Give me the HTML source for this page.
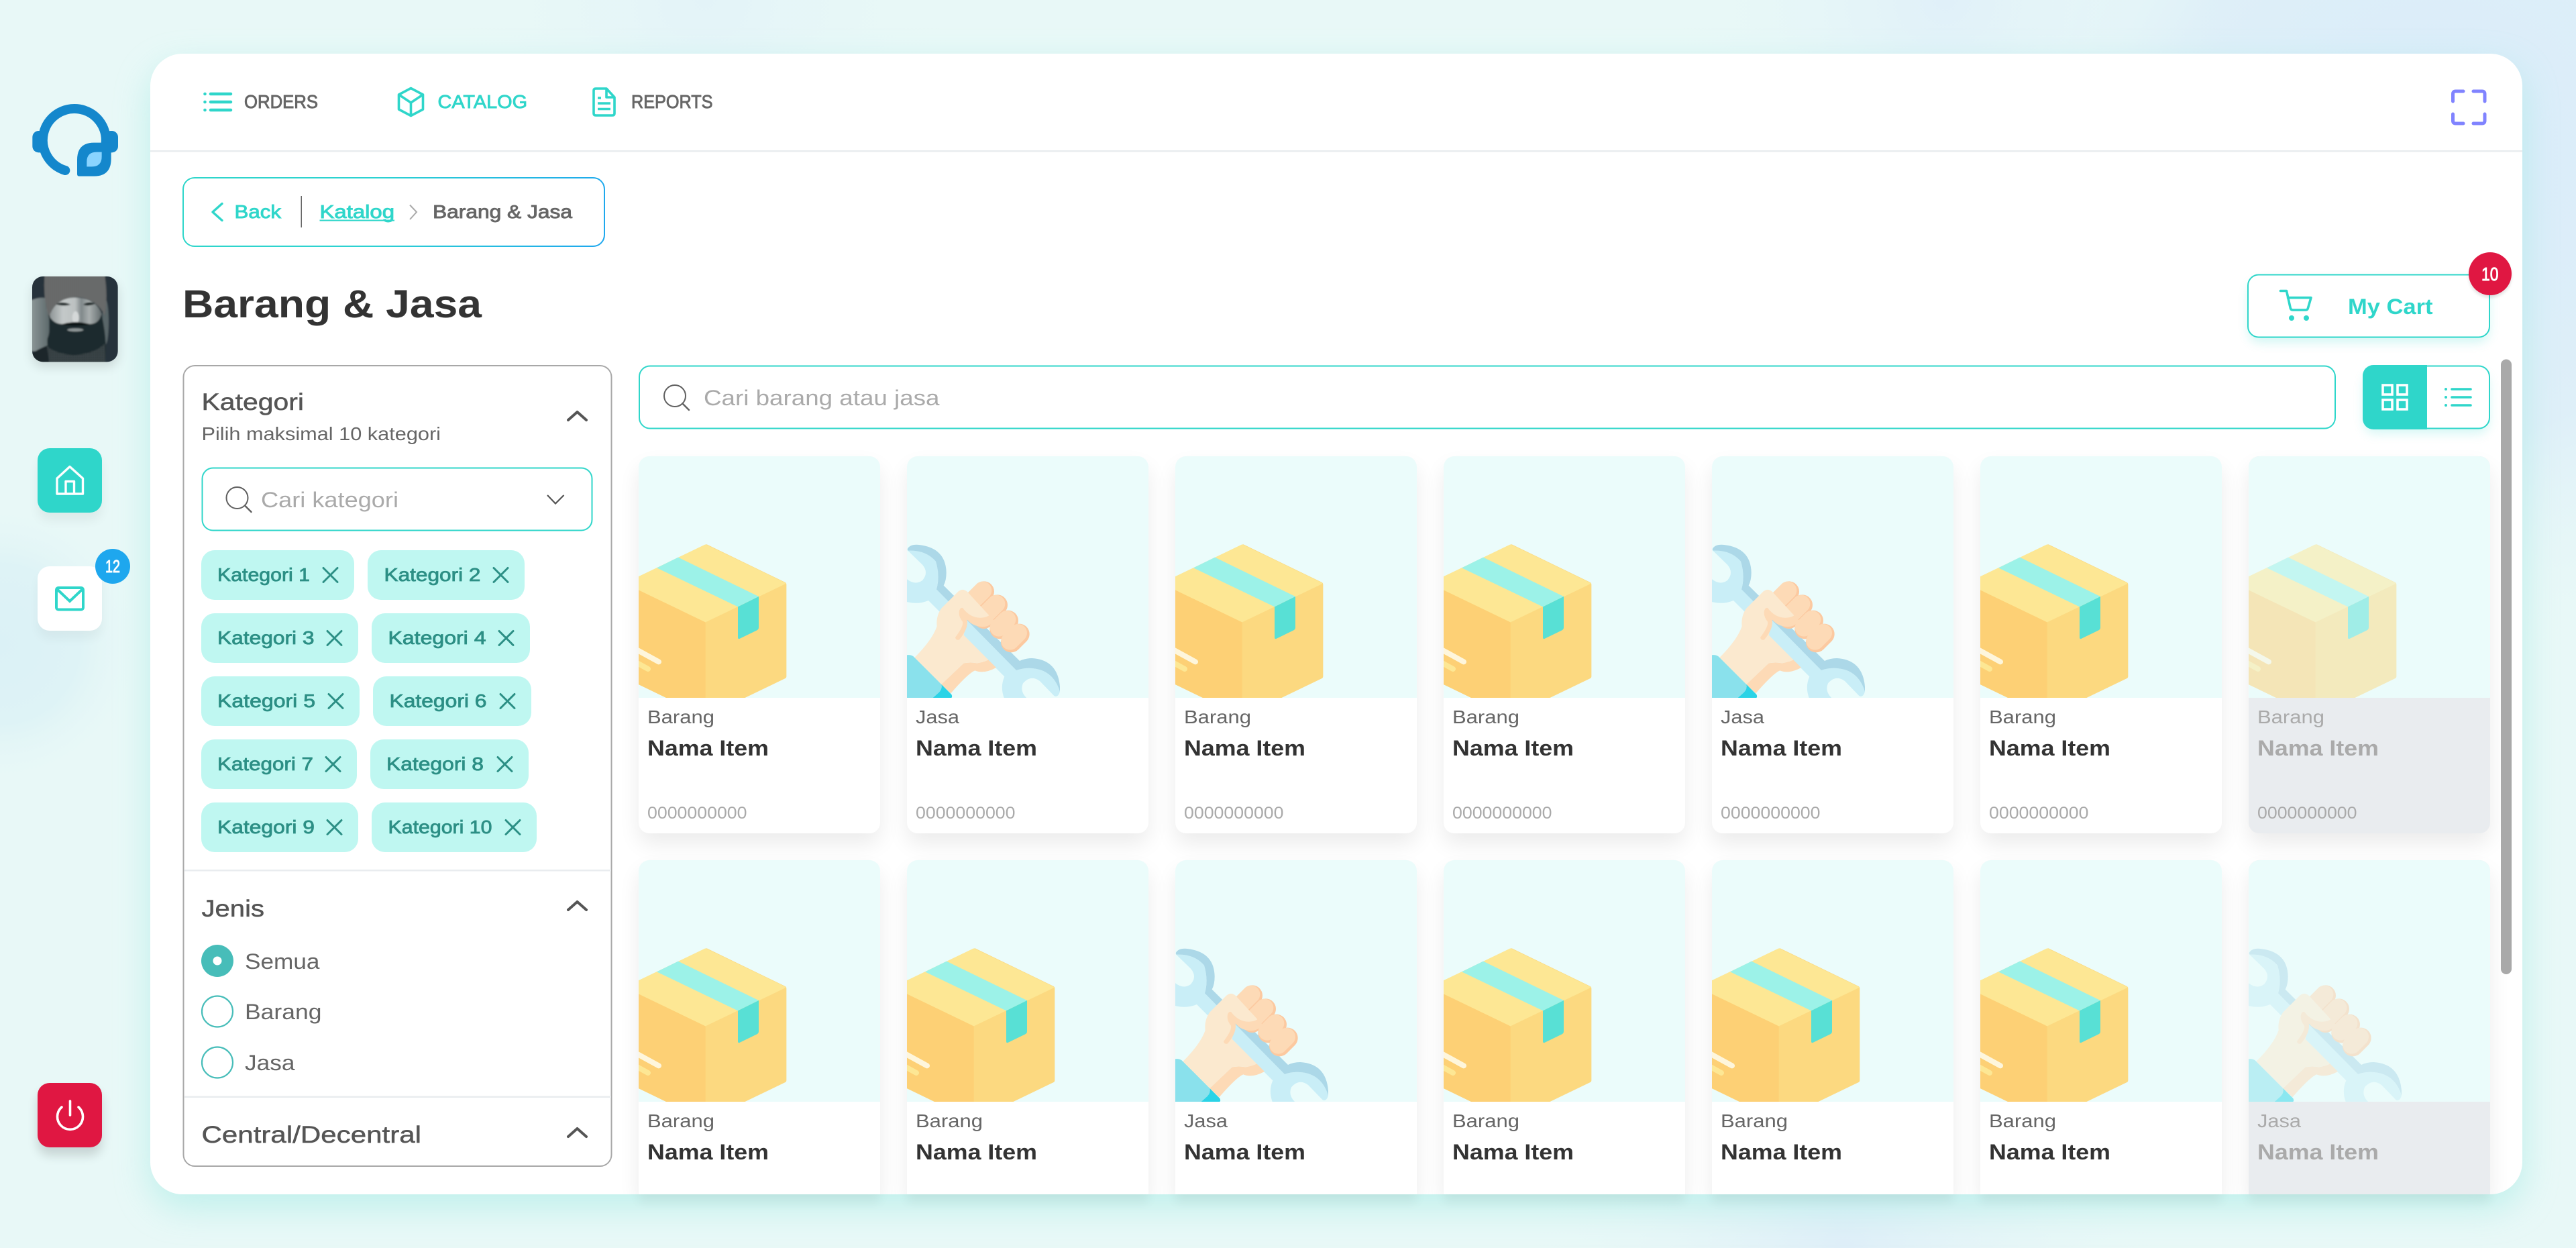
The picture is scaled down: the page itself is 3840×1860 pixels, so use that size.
<!DOCTYPE html>
<html lang="id">
<head>
<meta charset="utf-8">
<title>Barang &amp; Jasa</title>
<style>
html,body{margin:0;padding:0;width:3840px;height:1860px;overflow:hidden;background:#e8f8f7}
svg{display:block}
text{font-family:"Liberation Sans",sans-serif;white-space:pre}
.m{stroke-width:.9px;paint-order:stroke}
.k{fill:#2c8f85;stroke:#2c8f85;stroke-width:.8px;font-size:28px}
.h{fill:#555;stroke:#555;stroke-width:.5px;font-size:35px}
.n{fill:#333;font-weight:bold;font-size:32px}
.ty{fill:#666;font-size:28px}
.co{fill:#aaa;font-size:25px}
</style>
</head>
<body>
<svg xmlns="http://www.w3.org/2000/svg" width="3840" height="1860" viewBox="0 0 3840 1860">
<defs>
<radialGradient id="g1" gradientUnits="userSpaceOnUse" cx="3640" cy="240" r="760"><stop offset="0" stop-color="#d9ebfa"/><stop offset=".55" stop-color="#deeff8"/><stop offset="1" stop-color="#e8f8f7" stop-opacity="0"/></radialGradient>
<radialGradient id="g2" gradientUnits="userSpaceOnUse" cx="2900" cy="0" r="420"><stop offset="0" stop-color="#e0f0f9"/><stop offset="1" stop-color="#e8f8f7" stop-opacity="0"/></radialGradient>
<radialGradient id="g3" gradientUnits="userSpaceOnUse" cx="1050" cy="0" r="380"><stop offset="0" stop-color="#e3f3f8"/><stop offset="1" stop-color="#e8f8f7" stop-opacity="0"/></radialGradient>
<radialGradient id="g4" gradientUnits="userSpaceOnUse" cx="0" cy="960" r="215"><stop offset="0" stop-color="#dbf1f6"/><stop offset=".55" stop-color="#def3f6"/><stop offset="1" stop-color="#e8f8f7" stop-opacity="0"/></radialGradient>
<radialGradient id="g5" gradientUnits="userSpaceOnUse" cx="2750" cy="1860" r="480"><stop offset="0" stop-color="#deeef8"/><stop offset="1" stop-color="#e8f8f7" stop-opacity="0"/></radialGradient>
<filter id="b28" x="-10%" y="-10%" width="120%" height="120%"><feGaussianBlur stdDeviation="26"/></filter>
<filter id="b16" x="-30%" y="-30%" width="160%" height="160%"><feGaussianBlur stdDeviation="16"/></filter>
<filter id="b8" x="-30%" y="-50%" width="160%" height="200%"><feGaussianBlur stdDeviation="8"/></filter>
<filter id="b2"><feGaussianBlur stdDeviation="2"/></filter>
<filter id="b6" x="-50%" y="-50%" width="200%" height="200%"><feGaussianBlur stdDeviation="8"/></filter>
<filter id="b20" x="-80%" y="-80%" width="260%" height="260%"><feGaussianBlur stdDeviation="18"/></filter>
<filter id="bs" x="-10%" y="-10%" width="120%" height="120%"><feGaussianBlur stdDeviation="3.5"/></filter>
<linearGradient id="bc" gradientUnits="userSpaceOnUse" x1="273" y1="264" x2="902" y2="367">
<stop offset="0" stop-color="#2fd6ca"/><stop offset=".45" stop-color="#2cd2d2"/><stop offset="1" stop-color="#1ea7ee"/>
</linearGradient>
<linearGradient id="face" x1="0" y1="0" x2="1" y2="0">
<stop offset="0" stop-color="#8e9596"/><stop offset=".25" stop-color="#c4c9c9"/><stop offset=".48" stop-color="#bcc1c1"/><stop offset=".6" stop-color="#80888a"/><stop offset=".75" stop-color="#a9afaf"/><stop offset="1" stop-color="#5f686a"/>
</linearGradient>
<linearGradient id="bgl" x1="0" y1="0" x2="1" y2="0"><stop offset="0" stop-color="#8f999a"/><stop offset="1" stop-color="#5e6a6c"/></linearGradient>
<pattern id="knit" width="9" height="9" patternUnits="userSpaceOnUse"><rect width="9" height="9" fill="#6e7070"/><rect width="3" height="9" fill="#585b5b"/></pattern>
<pattern id="fr" width="10" height="10" patternUnits="userSpaceOnUse"><rect width="10" height="10" fill="#1f2a2e"/><rect width="5" height="5" fill="#727a7b"/><rect x="5" y="5" width="4" height="4" fill="#596263"/></pattern>
<clipPath id="mainc"><rect x="224" y="80" width="3536" height="1700" rx="48"/></clipPath>
<clipPath id="ic"><path d="M0,360V16A16,16 0 0 1 16,0H344A16,16 0 0 1 360,16V360Z"/></clipPath>
<clipPath id="av"><rect x="54" y="66" width="383" height="382" rx="48"/></clipPath>

<g id="card"><rect width="360" height="562" rx="16" fill="#fff"/><path d="M0,360V16A16,16 0 0 1 16,0H344A16,16 0 0 1 360,16V360Z" fill="#ebfcfb"/></g>
<g id="cardd"><rect width="360" height="562" rx="16" fill="#e9ecef"/><path d="M0,360V16A16,16 0 0 1 16,0H344A16,16 0 0 1 360,16V360Z" fill="#ebfcfb"/></g>

<g id="box" clip-path="url(#ic)"><g transform="translate(-12,120) scale(.33333)">
<path d="M335,35Q340,33 345,36L692,204Q697,207 697,214V624Q697,630 692,633L335,805L-27,630V208Z" fill="#fcd980"/>
<path d="M335,382L-27,208V630L335,805Z" fill="#fdd075"/>
<path d="M328,37Q335,33 342,37L690,205Q697,208 690,212L335,382L-27,208Z" fill="#fde794"/>
<path d="M213,92L573,267L480,313L117,139Z" fill="#9cf2e8"/>
<path d="M573,267V405Q573,415 565,418L487,456Q480,458 480,450V313Z" fill="#58e0d5"/>
<path d="M0,490L126,559" stroke="#fef6dc" stroke-width="24" stroke-linecap="round" fill="none"/>
<path d="M0,548L78,591" stroke="#fde794" stroke-width="24" stroke-linecap="round" fill="none"/>
</g></g>

<g id="wrench" clip-path="url(#ic)"><g transform="translate(-12,110) scale(.33333)">
<path d="M40,92Q120,88 165,140Q185,200 168,265L525,627Q560,615 595,618Q690,625 720,722Q712,750 695,742L630,675Q590,645 555,685Q540,720 570,750H470Q452,700 472,655L132,315Q85,335 30,320V215Q70,250 105,225Q135,190 105,155Z" fill="#c9eef7"/>
<path d="M38,85Q50,62 90,66Q210,80 212,190Q212,225 200,248L540,585Q565,573 595,573Q710,580 720,700L720,722Q690,625 595,618Q560,615 525,627L168,265Q185,205 165,140Q120,88 40,92Z" fill="#acd8e8"/>
<g fill="none" stroke-linecap="round">
<path d="M380,275L320,335" stroke="#fcc9a0" stroke-width="92"/><path d="M375,270L315,330" stroke="#fddab6" stroke-width="80"/>
<path d="M440,335L380,395" stroke="#fcc9a0" stroke-width="92"/><path d="M435,330L375,390" stroke="#fddab6" stroke-width="80"/>
<path d="M488,405L452,441" stroke="#fcc9a0" stroke-width="92"/><path d="M483,400L447,436" stroke="#fddab6" stroke-width="80"/>
<path d="M538,465L502,501" stroke="#fcc9a0" stroke-width="92"/><path d="M533,460L497,496" stroke="#fddab6" stroke-width="80"/>
</g>
<path d="M435,615Q380,645 340,628Q310,640 232,730L190,690L290,595Q320,590 350,595Q380,590 400,580Z" fill="#fddab6"/>
<path d="M70,570Q150,490 170,430Q165,385 190,350L265,275Q285,258 305,275L425,405L400,420L305,400L290,470L400,580Q380,590 350,595Q320,590 290,595L190,690Z" fill="#fbe9cf"/>
<path d="M285,348Q320,395 370,392Q395,390 405,380L425,405Q405,435 370,432Q330,430 305,400Q312,440 270,490Q255,495 252,480Q290,430 285,410Q265,385 270,360Q275,345 285,348Z" fill="#fddab6"/>
<path d="M30,560Q50,555 65,565L190,690Q195,715 180,725L152,750H30Z" fill="#8ae1ec"/>
<path d="M190,690L235,735Q240,745 235,750H152L180,725Q195,710 190,690Z" fill="#2bd3e6"/>
</g></g>

<path id="xi" d="M-10.5,-10.5L10.5,10.5M10.5,-10.5L-10.5,10.5" stroke="#2c8f85" stroke-width="3" fill="none" stroke-linecap="round"/>
<g id="sic" fill="none" stroke="#5f5f5f" stroke-width="2"><circle cx="0" cy="0" r="16"/><path d="M11.5,11.5L21,21" stroke-linecap="round" stroke-width="2.4"/></g>
<path id="cup" d="M847,0L860.5,-12L874,0" fill="none" stroke="#555" stroke-width="4" stroke-linecap="round" stroke-linejoin="round"/>
<rect id="cs" width="360" height="500" rx="16" fill="#000" opacity=".075" filter="url(#b16)"/>
<rect id="cl" width="360" height="562" rx="16" fill="#000" opacity=".075" filter="url(#b16)"/>
</defs>

<!-- page background -->
<rect width="3840" height="1860" fill="#e8f8f7"/>
<rect x="2880" y="0" width="960" height="1000" fill="url(#g1)"/>
<rect x="2480" y="0" width="840" height="420" fill="url(#g2)"/>
<rect x="670" y="0" width="760" height="380" fill="url(#g3)"/>
<rect x="0" y="740" width="220" height="440" fill="url(#g4)"/>
<rect x="2270" y="1380" width="960" height="480" fill="url(#g5)"/>

<!-- main shadow -->
<rect x="224" y="100" width="3536" height="1700" rx="48" fill="#a5ebe4" opacity=".62" filter="url(#b28)"/>
<g>
<rect x="952" y="1762" width="360" height="30" fill="#000" opacity=".05" filter="url(#b8)"/>
<rect x="1352" y="1762" width="360" height="30" fill="#000" opacity=".05" filter="url(#b8)"/>
<rect x="1752" y="1762" width="360" height="30" fill="#000" opacity=".05" filter="url(#b8)"/>
<rect x="2152" y="1762" width="360" height="30" fill="#000" opacity=".05" filter="url(#b8)"/>
<rect x="2552" y="1762" width="360" height="30" fill="#000" opacity=".05" filter="url(#b8)"/>
<rect x="2952" y="1762" width="360" height="30" fill="#000" opacity=".05" filter="url(#b8)"/>
<rect x="3352" y="1762" width="360" height="30" fill="#000" opacity=".05" filter="url(#b8)"/>
</g>
<rect x="224" y="80" width="3536" height="1700" rx="48" fill="#fff"/>

<!-- sidebar logo -->
<g transform="translate(20,130) scale(.33333)">
<rect x="85" y="195" width="60" height="97" rx="28" fill="#1487cc"/>
<rect x="408" y="195" width="60" height="97" rx="28" fill="#1487cc"/>
<path d="M232,372A141,141 0 1 1 413,250" fill="none" stroke="#1487cc" stroke-width="42" stroke-linecap="round"/>
<path d="M360,248H437V320Q437,398 360,398H295Q285,398 285,388V325Q285,248 360,248Z" fill="#1487cc"/>
<path d="M372,290H395V310Q395,355 350,355H328V333Q328,290 372,290Z" fill="#8ad4ff"/>
</g>

<!-- avatar -->
<rect x="48" y="420" width="128" height="127" rx="16" fill="#000" opacity=".12" filter="url(#b6)"/>
<g transform="translate(30,390) scale(.33333)" clip-path="url(#av)">
<g filter="url(#bs)">
<rect x="44" y="56" width="403" height="402" fill="#25333a"/>
<path d="M44,175Q100,150 130,170V400H44Z" fill="url(#bgl)"/>
<ellipse cx="382" cy="270" rx="14" ry="100" fill="#687376" opacity=".8"/>
<path d="M44,415Q90,385 130,372L190,458H44Z" fill="#1c272b"/>
<path d="M110,56H378Q392,140 380,245Q345,165 250,158Q165,165 128,250Q100,150 110,56Z" fill="url(#knit)"/>
<path d="M134,235Q165,160 250,160Q340,165 366,235Q372,275 350,310H150Q130,275 134,235Z" fill="url(#face)"/>
<path d="M160,190Q190,174 226,192Q195,202 160,190ZM282,192Q305,174 336,188Q305,202 282,192Z" fill="#1d2628"/>
<ellipse cx="248" cy="250" rx="15" ry="28" fill="#d4d8d8"/>
<path d="M126,235Q140,300 122,345Q118,400 145,458H376Q395,370 364,235Q350,285 300,278Q250,262 200,278Q150,285 126,235Z" fill="#1f2a2e"/>
<path d="M185,280Q245,262 315,280Q250,294 185,280Z" fill="#0f1517"/>
<ellipse cx="247" cy="305" rx="36" ry="7" fill="#8d9596"/>
<path d="M120,375Q150,410 240,418Q340,410 380,365L382,458H130Z" fill="url(#fr)" opacity=".7"/>
</g>
</g>

<!-- sidebar buttons -->
<rect x="56" y="680" width="96" height="96" rx="18" fill="#000" opacity=".05" filter="url(#b6)"/>
<rect x="56" y="668" width="96" height="96" rx="18" fill="#2fd6ca"/>
<path d="M104,695.5L123.5,713V736H85V713Z M98,736V717.5H110.5V736" fill="none" stroke="#fff" stroke-width="3.4" stroke-linejoin="round"/>
<rect x="56" y="856" width="96" height="96" rx="18" fill="#000" opacity=".04" filter="url(#b6)"/>
<rect x="56" y="844" width="96" height="96" rx="18" fill="#fff"/>
<rect x="84" y="876" width="40" height="32.5" rx="3" fill="none" stroke="#2fd6ca" stroke-width="4"/>
<path d="M85,878L104,896L123,878" fill="none" stroke="#2fd6ca" stroke-width="4"/>
<circle cx="168" cy="844" r="26" fill="#1ea7ee"/>
<text x="157" y="853" font-size="26" textLength="22" lengthAdjust="spacingAndGlyphs" fill="#fff" stroke="#fff" class="m">12</text>
<rect x="56" y="1626" width="96" height="96" rx="18" fill="#000" opacity=".14" filter="url(#b6)"/>
<rect x="56" y="1614" width="96" height="96" rx="18" fill="#e01742"/>
<path d="M92,1650A19,19 0 1 0 117,1650" fill="none" stroke="#fff" stroke-width="3.6" stroke-linecap="round"/>
<path d="M104.5,1641V1662" stroke="#fff" stroke-width="3.6" stroke-linecap="round"/>

<!-- top nav -->
<path d="M314,140H344M314,152H344M314,164H344" fill="none" stroke="#2fd6ca" stroke-width="4.5" stroke-linecap="round"/>
<g fill="#2fd6ca"><circle cx="305.5" cy="140" r="2.3"/><circle cx="305.5" cy="152" r="2.3"/><circle cx="305.5" cy="164" r="2.3"/></g>
<text x="364" y="161" font-size="28" textLength="110" lengthAdjust="spacingAndGlyphs" fill="#666" stroke="#666" class="m">ORDERS</text>
<path d="M612.5,131.5L630.5,141V163L612.5,172.5L594.5,163V141ZM594.5,141L612.5,153L630.5,141M612.5,153V172.5" fill="none" stroke="#2fd6ca" stroke-width="3.6" stroke-linejoin="round"/>
<text x="652.5" y="161" font-size="28" textLength="133.5" lengthAdjust="spacingAndGlyphs" fill="#2fd6ca" stroke="#2fd6ca" class="m">CATALOG</text>
<path d="M888,132H904L916,145V169Q916,172 913,172H888Q885,172 885,169V135Q885,132 888,132ZM904,132V145H916" fill="none" stroke="#2fd6ca" stroke-width="3.6" stroke-linejoin="round"/>
<path d="M891,146H896M891,154H910M891,162.5H910" fill="none" stroke="#2fd6ca" stroke-width="3.6"/>
<text x="941" y="161" font-size="28" textLength="121.5" lengthAdjust="spacingAndGlyphs" fill="#666" stroke="#666" class="m">REPORTS</text>
<path d="M3656.5,151V140Q3656.5,136 3660.5,136H3672M3687,136H3700Q3704,136 3704,140V151M3656.5,170V180Q3656.5,184 3660.5,184H3672M3687,184H3700Q3704,184 3704,180V170" fill="none" stroke="#8083ff" stroke-width="5" stroke-linecap="round"/>
<rect x="224" y="224" width="3536" height="2.5" fill="#e9ecef"/>

<!-- breadcrumb -->
<rect x="273" y="265" width="628" height="102" rx="17" fill="#fff" stroke="url(#bc)" stroke-width="2"/>
<path d="M331,303.5L317,316L331,328.5" fill="none" stroke="#2fd6ca" stroke-width="3.4" stroke-linecap="round" stroke-linejoin="round"/>
<text x="349.5" y="325" font-size="28" textLength="69.5" lengthAdjust="spacingAndGlyphs" fill="#2fd6ca" stroke="#2fd6ca" class="m">Back</text>
<rect x="448.5" y="292" width="1.5" height="47" fill="#666"/>
<text x="476.5" y="325" font-size="28" textLength="111.5" lengthAdjust="spacingAndGlyphs" fill="#2fd6ca" stroke="#2fd6ca" class="m">Katalog</text>
<rect x="476.5" y="327.5" width="111.5" height="2" fill="#2fd6ca"/>
<path d="M611,305.5L621,316L611,327" fill="none" stroke="#aaa" stroke-width="2"/>
<text x="645" y="325" font-size="28" textLength="208" lengthAdjust="spacingAndGlyphs" fill="#666" stroke="#666" class="m">Barang &amp; Jasa</text>

<!-- title -->
<text x="272" y="473" font-size="58" font-weight="bold" textLength="446" lengthAdjust="spacingAndGlyphs" fill="#333">Barang &amp; Jasa</text>

<!-- my cart -->
<rect x="3352" y="420" width="358" height="90" rx="16" fill="#2fd6ca" opacity=".22" filter="url(#b8)"/>
<rect x="3351" y="409.5" width="360" height="93" rx="16" fill="#fff" stroke="#2fd6ca" stroke-width="2"/>
<path d="M3399.5,433.5H3408.5L3414,458Q3414.5,462 3418,462H3437Q3440,462 3440.5,459L3445,443.7H3410.5" fill="none" stroke="#2fd6ca" stroke-width="3.6" stroke-linecap="round" stroke-linejoin="round"/>
<circle cx="3416" cy="474" r="4" fill="#2fd6ca"/><circle cx="3438" cy="474" r="4" fill="#2fd6ca"/>
<text x="3500" y="468" font-size="32" font-weight="bold" textLength="126.5" lengthAdjust="spacingAndGlyphs" fill="#2fd6ca">My Cart</text>
<circle cx="3712" cy="412" r="32" fill="#000" opacity=".1" filter="url(#b2)"/>
<circle cx="3712" cy="408" r="32" fill="#e01742"/>
<text x="3699" y="418" font-size="28" textLength="25.5" lengthAdjust="spacingAndGlyphs" fill="#fff" stroke="#fff" class="m">10</text>

<!-- filter panel -->
<rect x="273.5" y="545" width="638" height="1193" rx="17" fill="#fff" stroke="#a8a8a8" stroke-width="2"/>
<text x="300.5" y="611" class="h" textLength="152.5" lengthAdjust="spacingAndGlyphs">Kategori</text>
<text x="300.5" y="656" font-size="28" fill="#666" textLength="356.5" lengthAdjust="spacingAndGlyphs">Pilih maksimal 10 kategori</text>
<use href="#cup" x="0" y="626"/>
<rect x="301.5" y="697.5" width="581" height="93" rx="16" fill="#fff" stroke="#2fd6ca" stroke-width="2"/>
<use href="#sic" x="353.5" y="742"/>
<text x="389" y="756" font-size="32" fill="#aaa" textLength="205" lengthAdjust="spacingAndGlyphs">Cari kategori</text>
<path d="M816,738L828,750.5L840.5,738" fill="none" stroke="#555" stroke-width="2.2"/>

<!-- tags -->
<g fill="#bff7f1">
<rect x="300" y="820" width="228" height="74" rx="20"/><rect x="548" y="820" width="234" height="74" rx="20"/>
<rect x="300" y="914" width="234" height="74" rx="20"/><rect x="554" y="914" width="236" height="74" rx="20"/>
<rect x="300" y="1008" width="236" height="74" rx="20"/><rect x="556" y="1008" width="236" height="74" rx="20"/>
<rect x="300" y="1102" width="232" height="74" rx="20"/><rect x="552" y="1102" width="236" height="74" rx="20"/>
<rect x="300" y="1196" width="234" height="74" rx="20"/><rect x="554" y="1196" width="246" height="74" rx="20"/>
</g>
<text x="324" y="866" class="k" textLength="138" lengthAdjust="spacingAndGlyphs">Kategori 1</text>
<text x="572.5" y="866" class="k" textLength="144" lengthAdjust="spacingAndGlyphs">Kategori 2</text>
<text x="324" y="960" class="k" textLength="144.5" lengthAdjust="spacingAndGlyphs">Kategori 3</text>
<text x="578.5" y="960" class="k" textLength="146" lengthAdjust="spacingAndGlyphs">Kategori 4</text>
<text x="324" y="1054" class="k" textLength="146" lengthAdjust="spacingAndGlyphs">Kategori 5</text>
<text x="580.5" y="1054" class="k" textLength="145" lengthAdjust="spacingAndGlyphs">Kategori 6</text>
<text x="324" y="1148" class="k" textLength="143" lengthAdjust="spacingAndGlyphs">Kategori 7</text>
<text x="576" y="1148" class="k" textLength="145" lengthAdjust="spacingAndGlyphs">Kategori 8</text>
<text x="324" y="1242" class="k" textLength="145" lengthAdjust="spacingAndGlyphs">Kategori 9</text>
<text x="578.5" y="1242" class="k" textLength="155" lengthAdjust="spacingAndGlyphs">Kategori 10</text>
<use href="#xi" x="492.5" y="857"/><use href="#xi" x="746.5" y="857"/>
<use href="#xi" x="498.5" y="951"/><use href="#xi" x="754.5" y="951"/>
<use href="#xi" x="500.5" y="1045"/><use href="#xi" x="756.5" y="1045"/>
<use href="#xi" x="496.5" y="1139"/><use href="#xi" x="752.5" y="1139"/>
<use href="#xi" x="498.5" y="1233"/><use href="#xi" x="764.5" y="1233"/>

<rect x="275" y="1296" width="636" height="2.5" fill="#e9ecef"/>
<text x="300.5" y="1366" class="h" textLength="93.5" lengthAdjust="spacingAndGlyphs">Jenis</text>
<use href="#cup" x="0" y="1356"/>
<circle cx="324" cy="1432" r="24" fill="#47bdb9"/><circle cx="324" cy="1432" r="6.5" fill="#fff"/>
<text x="365" y="1444" font-size="32" fill="#666" textLength="111.5" lengthAdjust="spacingAndGlyphs">Semua</text>
<circle cx="324" cy="1507.5" r="23" fill="#fff" stroke="#47bdb9" stroke-width="2.2"/>
<text x="365" y="1519" font-size="32" fill="#666" textLength="114.5" lengthAdjust="spacingAndGlyphs">Barang</text>
<circle cx="324" cy="1583.5" r="23" fill="#fff" stroke="#47bdb9" stroke-width="2.2"/>
<text x="365" y="1595" font-size="32" fill="#666" textLength="74.5" lengthAdjust="spacingAndGlyphs">Jasa</text>
<rect x="275" y="1633.5" width="636" height="2.5" fill="#e9ecef"/>
<text x="300.5" y="1703" class="h" textLength="327.5" lengthAdjust="spacingAndGlyphs">Central/Decentral</text>
<use href="#cup" x="0" y="1694"/>

<!-- search -->
<rect x="953" y="545.5" width="2528" height="93" rx="16" fill="#fff" stroke="#2fd6ca" stroke-width="2"/>
<use href="#sic" x="1006" y="590"/>
<text x="1049" y="604" font-size="32" fill="#aaa" textLength="351.5" lengthAdjust="spacingAndGlyphs">Cari barang atau jasa</text>

<!-- view toggle -->
<rect x="3524" y="556" width="186" height="90" rx="16" fill="#2fd6ca" opacity=".2" filter="url(#b8)"/>
<rect x="3523" y="545.5" width="188" height="93" rx="16" fill="#fff" stroke="#2fd6ca" stroke-width="2"/>
<path d="M3618,544V640H3538A16,16 0 0 1 3522,624V560A16,16 0 0 1 3538,544Z" fill="#2fd6ca"/>
<g fill="none" stroke="#fff" stroke-width="3.6">
<rect x="3552" y="574" width="14" height="14"/><rect x="3574" y="574" width="14" height="14"/>
<rect x="3552" y="596" width="14" height="14"/><rect x="3574" y="596" width="14" height="14"/>
</g>
<path d="M3655,580H3683M3655,592H3683M3655,604H3683" fill="none" stroke="#2fd6ca" stroke-width="3.6" stroke-linecap="round"/>
<g fill="#2fd6ca"><circle cx="3646" cy="580" r="2"/><circle cx="3646" cy="592" r="2"/><circle cx="3646" cy="604" r="2"/></g>

<!-- product grid -->
<g clip-path="url(#mainc)">
<use href="#cl" x="952" y="696"/><use href="#cl" x="1352" y="696"/><use href="#cl" x="1752" y="696"/><use href="#cl" x="2152" y="696"/><use href="#cl" x="2552" y="696"/><use href="#cl" x="2952" y="696"/><use href="#cl" x="3352" y="696"/>
<use href="#cs" x="952" y="1298"/><use href="#cs" x="1352" y="1298"/><use href="#cs" x="1752" y="1298"/><use href="#cs" x="2152" y="1298"/><use href="#cs" x="2552" y="1298"/><use href="#cs" x="2952" y="1298"/><use href="#cs" x="3352" y="1298"/>

<use href="#card" x="952" y="680"/><use href="#box" x="952" y="680"/>
<use href="#card" x="1352" y="680"/><use href="#wrench" x="1352" y="680"/>
<use href="#card" x="1752" y="680"/><use href="#box" x="1752" y="680"/>
<use href="#card" x="2152" y="680"/><use href="#box" x="2152" y="680"/>
<use href="#card" x="2552" y="680"/><use href="#wrench" x="2552" y="680"/>
<use href="#card" x="2952" y="680"/><use href="#box" x="2952" y="680"/>
<use href="#cardd" x="3352" y="680"/><use href="#box" x="3352" y="680" opacity=".5"/>

<use href="#card" x="952" y="1282"/><use href="#box" x="952" y="1282"/>
<use href="#card" x="1352" y="1282"/><use href="#box" x="1352" y="1282"/>
<use href="#card" x="1752" y="1282"/><use href="#wrench" x="1752" y="1282"/>
<use href="#card" x="2152" y="1282"/><use href="#box" x="2152" y="1282"/>
<use href="#card" x="2552" y="1282"/><use href="#box" x="2552" y="1282"/>
<use href="#card" x="2952" y="1282"/><use href="#box" x="2952" y="1282"/>
<use href="#cardd" x="3352" y="1282"/><use href="#wrench" x="3352" y="1282" opacity=".5"/>
</g>

<text x="965" y="1078" class="ty" textLength="100" lengthAdjust="spacingAndGlyphs">Barang</text>
<text x="965" y="1126" class="n" textLength="181" lengthAdjust="spacingAndGlyphs">Nama Item</text>
<text x="965" y="1220" class="co" textLength="148.5" lengthAdjust="spacingAndGlyphs">0000000000</text>
<text x="1365" y="1078" class="ty" textLength="65" lengthAdjust="spacingAndGlyphs">Jasa</text>
<text x="1365" y="1126" class="n" textLength="181" lengthAdjust="spacingAndGlyphs">Nama Item</text>
<text x="1365" y="1220" class="co" textLength="148.5" lengthAdjust="spacingAndGlyphs">0000000000</text>
<text x="1765" y="1078" class="ty" textLength="100" lengthAdjust="spacingAndGlyphs">Barang</text>
<text x="1765" y="1126" class="n" textLength="181" lengthAdjust="spacingAndGlyphs">Nama Item</text>
<text x="1765" y="1220" class="co" textLength="148.5" lengthAdjust="spacingAndGlyphs">0000000000</text>
<text x="2165" y="1078" class="ty" textLength="100" lengthAdjust="spacingAndGlyphs">Barang</text>
<text x="2165" y="1126" class="n" textLength="181" lengthAdjust="spacingAndGlyphs">Nama Item</text>
<text x="2165" y="1220" class="co" textLength="148.5" lengthAdjust="spacingAndGlyphs">0000000000</text>
<text x="2565" y="1078" class="ty" textLength="65" lengthAdjust="spacingAndGlyphs">Jasa</text>
<text x="2565" y="1126" class="n" textLength="181" lengthAdjust="spacingAndGlyphs">Nama Item</text>
<text x="2565" y="1220" class="co" textLength="148.5" lengthAdjust="spacingAndGlyphs">0000000000</text>
<text x="2965" y="1078" class="ty" textLength="100" lengthAdjust="spacingAndGlyphs">Barang</text>
<text x="2965" y="1126" class="n" textLength="181" lengthAdjust="spacingAndGlyphs">Nama Item</text>
<text x="2965" y="1220" class="co" textLength="148.5" lengthAdjust="spacingAndGlyphs">0000000000</text>
<text x="3365" y="1078" class="ty" style="fill:#aaa" textLength="100" lengthAdjust="spacingAndGlyphs">Barang</text>
<text x="3365" y="1126" class="n" style="fill:#aaa" textLength="181" lengthAdjust="spacingAndGlyphs">Nama Item</text>
<text x="3365" y="1220" class="co" textLength="148.5" lengthAdjust="spacingAndGlyphs">0000000000</text>

<text x="965" y="1680" class="ty" textLength="100" lengthAdjust="spacingAndGlyphs">Barang</text>
<text x="965" y="1728" class="n" textLength="181" lengthAdjust="spacingAndGlyphs">Nama Item</text>
<text x="1365" y="1680" class="ty" textLength="100" lengthAdjust="spacingAndGlyphs">Barang</text>
<text x="1365" y="1728" class="n" textLength="181" lengthAdjust="spacingAndGlyphs">Nama Item</text>
<text x="1765" y="1680" class="ty" textLength="65" lengthAdjust="spacingAndGlyphs">Jasa</text>
<text x="1765" y="1728" class="n" textLength="181" lengthAdjust="spacingAndGlyphs">Nama Item</text>
<text x="2165" y="1680" class="ty" textLength="100" lengthAdjust="spacingAndGlyphs">Barang</text>
<text x="2165" y="1728" class="n" textLength="181" lengthAdjust="spacingAndGlyphs">Nama Item</text>
<text x="2565" y="1680" class="ty" textLength="100" lengthAdjust="spacingAndGlyphs">Barang</text>
<text x="2565" y="1728" class="n" textLength="181" lengthAdjust="spacingAndGlyphs">Nama Item</text>
<text x="2965" y="1680" class="ty" textLength="100" lengthAdjust="spacingAndGlyphs">Barang</text>
<text x="2965" y="1728" class="n" textLength="181" lengthAdjust="spacingAndGlyphs">Nama Item</text>
<text x="3365" y="1680" class="ty" style="fill:#aaa" textLength="65" lengthAdjust="spacingAndGlyphs">Jasa</text>
<text x="3365" y="1728" class="n" style="fill:#aaa" textLength="181" lengthAdjust="spacingAndGlyphs">Nama Item</text>

<!-- scrollbar -->
<rect x="3728" y="535.5" width="16" height="916.5" rx="8" fill="#a9a9a9"/>
</svg>
</body>
</html>
